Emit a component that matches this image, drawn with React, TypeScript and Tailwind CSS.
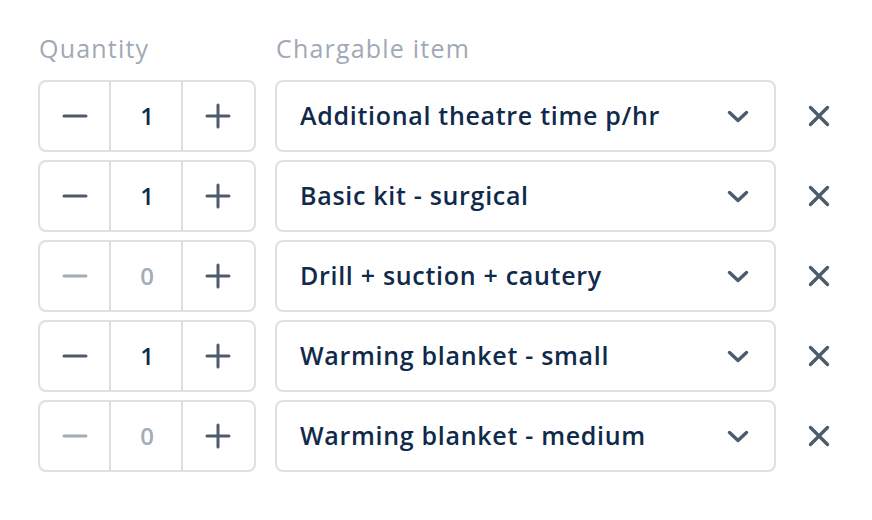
import { useState } from "react";

interface Line {
  id: number;
  qty: number;
  item: string;
}

const initialLines: Line[] = [
  { id: 1, qty: 1, item: "Additional theatre time p/hr" },
  { id: 2, qty: 1, item: "Basic kit - surgical" },
  { id: 3, qty: 0, item: "Drill + suction + cautery" },
  { id: 4, qty: 1, item: "Warming blanket - small" },
  { id: 5, qty: 0, item: "Warming blanket - medium" },
];

const MinusIcon = ({ disabled }: { disabled: boolean }) => (
  <svg width="26" height="26" viewBox="0 0 26 26" fill="none">
    <path
      d="M2 13h22"
      stroke={disabled ? "#a3acb8" : "#4e5b6d"}
      strokeWidth="3"
      strokeLinecap="round"
    />
  </svg>
);

const PlusIcon = () => (
  <svg width="26" height="26" viewBox="0 0 26 26" fill="none">
    <path d="M2 13h22M13 2v22" stroke="#4e5b6d" strokeWidth="3" strokeLinecap="round" />
  </svg>
);

const ChevronIcon = () => (
  <svg width="22" height="13" viewBox="0 0 22 13" fill="none">
    <path
      d="M2.5 2.5 11 10.5l8.5-8"
      stroke="#4e5b6d"
      strokeWidth="3.4"
      strokeLinecap="round"
      strokeLinejoin="round"
    />
  </svg>
);

const CloseIcon = () => (
  <svg width="22" height="22" viewBox="0 0 22 22" fill="none">
    <path
      d="M2.5 2.5l17 17M19.5 2.5l-17 17"
      stroke="#4e5b6d"
      strokeWidth="3.4"
      strokeLinecap="round"
    />
  </svg>
);

export default function App() {
  const [lines, setLines] = useState(initialLines);

  const changeQty = (id: number, delta: number) => {
    setLines((prev) =>
      prev.map((l) => (l.id === id ? { ...l, qty: Math.max(0, l.qty + delta) } : l))
    );
  };

  const removeLine = (id: number) => setLines((prev) => prev.filter((l) => l.id !== id));

  return (
    <div
      className="min-h-screen bg-white pl-[38px] pt-[32px]"
      style={{ fontFamily: '"Open Sans", "Noto Sans", sans-serif' }}
    >
      {/* Column headings */}
      <div className="flex h-[32px] items-center text-[25px] leading-[32px] tracking-[1.2px] text-[#a0a9b5]">
        <div className="w-[218px] pl-[1px]">Quantity</div>
        <div className="ml-[19px] pl-[1px]">Chargable item</div>
      </div>

      {/* Line items */}
      <div className="mt-[16px] flex flex-col gap-[8px]">
        {lines.map((line) => {
          const empty = line.qty === 0;
          return (
            <div key={line.id} className="flex items-center">
              <div className="grid h-[72px] w-[218px] grid-cols-3 divide-x-2 divide-[#e0e0e0] rounded-lg border-2 border-[#e0e0e0]">
                <button
                  onClick={() => changeQty(line.id, -1)}
                  className="flex items-center justify-center"
                  disabled={empty}
                >
                  <MinusIcon disabled={empty} />
                </button>
                <div
                  className={`flex items-center justify-center pl-[2px] text-[24px] font-semibold ${
                    empty ? "text-[#a3acb8]" : "text-[#0f2a4a]"
                  }`}
                >
                  {line.qty}
                </div>
                <button
                  onClick={() => changeQty(line.id, 1)}
                  className="flex items-center justify-center"
                >
                  <PlusIcon />
                </button>
              </div>

              <button className="ml-[19px] flex h-[72px] w-[501px] items-center justify-between rounded-lg border-2 border-[#e0e0e0] pl-[23px] pr-[25px] text-left">
                <span className="text-[25px] font-semibold tracking-[0.7px] text-[#0f2a4a]">
                  {line.item}
                </span>
                <ChevronIcon />
              </button>

              <button
                onClick={() => removeLine(line.id)}
                className="ml-[21px] flex h-[44px] w-[44px] items-center justify-center"
              >
                <CloseIcon />
              </button>
            </div>
          );
        })}
      </div>
    </div>
  );
}
